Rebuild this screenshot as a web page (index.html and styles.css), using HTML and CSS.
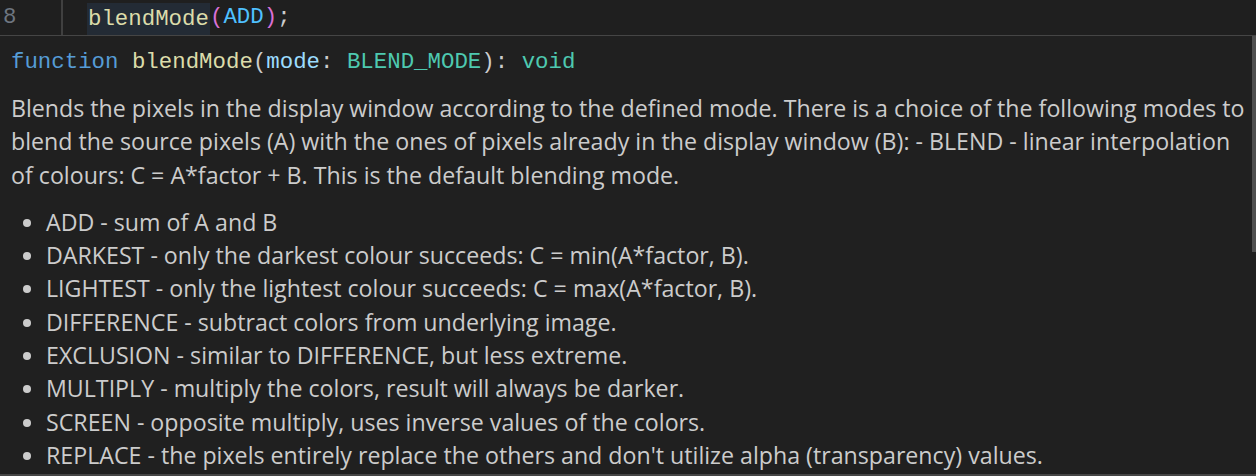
FILE: index.html
```html
<!DOCTYPE html>
<html>
<head>
<meta charset="utf-8">
<link rel="stylesheet" href="styles.css">
</head>
<body>
<div class="editor-line">
  <div class="gutter"><span class="line-no">8</span></div>
  <div class="indent-guide"></div>
  <div class="code"><span class="hl"><span class="fn">blendMode</span></span><span class="br">(</span><span class="const">ADD</span><span class="br">)</span><span class="punc">;</span></div>
</div>
<div class="hover">
  <div class="hover-body">
    <div class="signature"><span class="kw">function</span> <span class="fn">blendMode</span><span class="punc">(</span><span class="param">mode</span><span class="punc">:</span> <span class="type">BLEND_MODE</span><span class="punc">):</span> <span class="type">void</span></div>
    <div class="docs">
      <p>Blends the pixels in the display window according to the defined mode. There is a choice of the following modes to blend the source pixels (A) with the ones of pixels already in the display window (B): - BLEND - linear interpolation of colours: C = A*factor + B. This is the default blending mode.</p>
      <ul>
        <li>ADD - sum of A and B</li>
        <li>DARKEST - only the darkest colour succeeds: C = min(A*factor, B).</li>
        <li>LIGHTEST - only the lightest colour succeeds: C = max(A*factor, B).</li>
        <li>DIFFERENCE - subtract colors from underlying image.</li>
        <li>EXCLUSION - similar to DIFFERENCE, but less extreme.</li>
        <li>MULTIPLY - multiply the colors, result will always be darker.</li>
        <li>SCREEN - opposite multiply, uses inverse values of the colors.</li>
        <li>REPLACE - the pixels entirely replace the others and don't utilize alpha (transparency) values.</li>
      </ul>
    </div>
  </div>
  <div class="scrollbar"><div class="thumb"></div></div>
</div>
</body>
</html>
```

FILE: styles.css
```css
html, body {
  margin: 0;
  padding: 0;
  background: #1f1f1f;
  width: 1256px;
  height: 476px;
  overflow: hidden;
}

.editor-line {
  display: flex;
  height: 35px;
  background: #1f1f1f;
  font-family: "Liberation Mono", monospace;
  font-size: 22.4px;
  line-height: 35px;
}

.gutter {
  width: 61px;
  color: #6e7681;
}

.line-no {
  padding-left: 3px;
}

.indent-guide {
  width: 2px;
  background: #404040;
}

.code {
  padding-left: 24px;
  display: flex;
  color: #cccccc;
}

.hl {
  background: #232b35;
  margin-top: 3px;
  line-height: 32px;
  height: 32px;
  padding: 0 1px;
}

.fn { color: #dcdcaa; }
.br { color: #da70d6; }
.const { color: #4fc1ff; }
.punc { color: #cccccc; }
.kw { color: #569cd6; }
.param { color: #9cdcfe; }
.type { color: #4ec9b0; }

.hover {
  display: flex;
  height: 438px;
  border-top: 1px solid #454545;
  border-bottom: 2px solid #454545;
  background: #202020;
}

.hover-body {
  flex: 1;
  overflow: hidden;
}

.signature {
  font-family: "Liberation Mono", monospace;
  font-size: 22.4px;
  line-height: 34px;
  padding: 9px 0 0 11px;
  height: 41px;
  white-space: pre;
}

.docs {
  font-family: "Open Sans", sans-serif;
  font-size: 23.2px;
  line-height: 33.3px;
  color: #cccccc;
  padding: 0 0 0 11px;
}

.docs p {
  margin: 6px 0 0 0;
}

.docs ul {
  margin: 14px 0 0 0;
  padding-left: 35px;
}

.scrollbar {
  width: 4px;
  display: flex;
  flex-direction: column;
}

.thumb {
  height: 216px;
  background: #4f4f4f;
}
```
